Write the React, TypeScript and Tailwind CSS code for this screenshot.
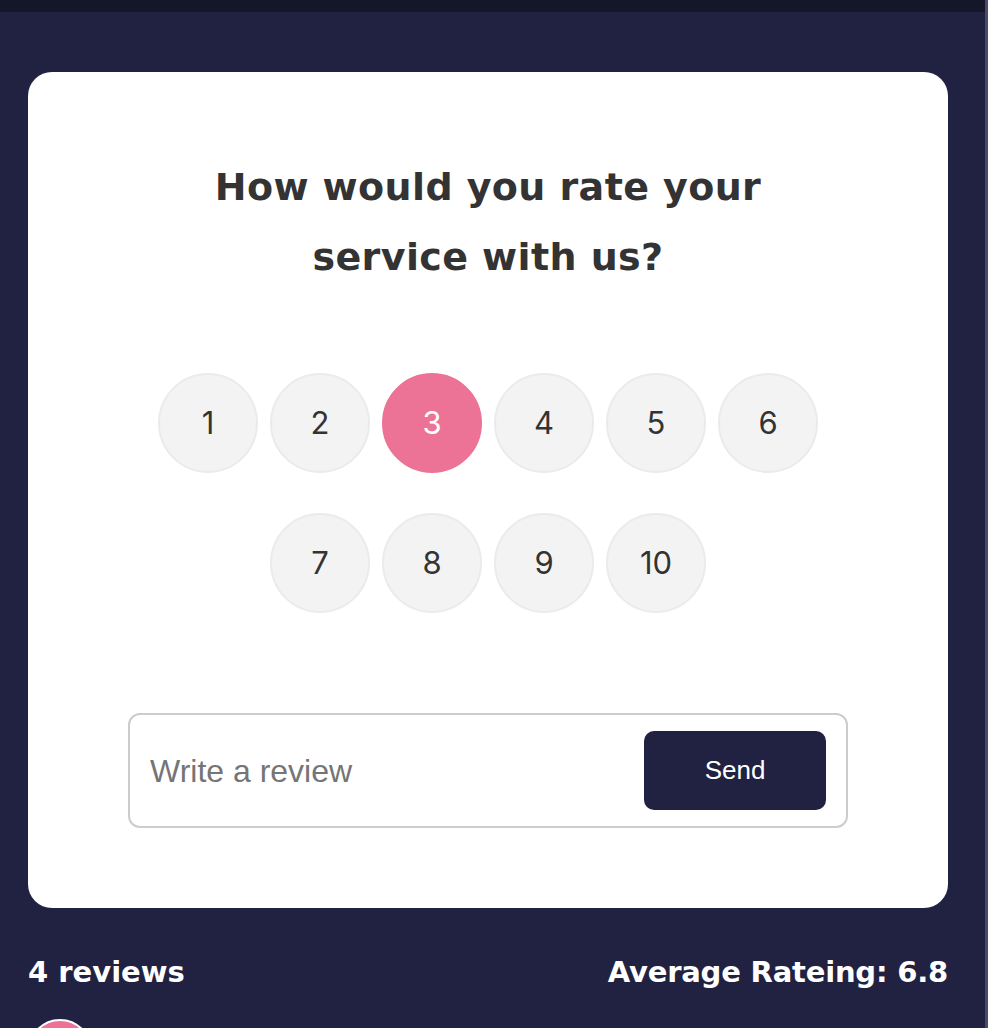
import React, { useState } from "react";

const ratings = [1, 2, 3, 4, 5, 6, 7, 8, 9, 10];

const App: React.FC = () => {
  const [selected, setSelected] = useState<number>(3);
  const [review, setReview] = useState<string>("");

  return (
    <div className="min-h-screen flex bg-[#212242] font-['Inter',sans-serif] overflow-hidden">
      <div className="flex-1 min-w-0">
        <div className="h-3 bg-[#15162a]" />
        <div className="pl-7 pr-[37px] pt-[60px]">
          <div className="bg-white rounded-[24px] pt-20 pb-20 flex flex-col items-center">
            <h1 className="text-center text-[38px] leading-[70px] font-bold text-[#333333] tracking-[0.4px] font-['DejaVu_Sans',sans-serif]">
              How would you rate your
              <br />
              service with us?
            </h1>

            <div className="mt-[81px] w-[700px] flex flex-wrap justify-center gap-x-3 gap-y-10">
              {ratings.map((n) => (
                <button
                  key={n}
                  onClick={() => setSelected(n)}
                  className={
                    n === selected
                      ? "w-[100px] h-[100px] rounded-full bg-[#ec7396] border-2 border-[#ec7396] text-white text-[31px] flex items-center justify-center"
                      : "w-[100px] h-[100px] rounded-full bg-[#f3f3f3] border-2 border-[#ebebeb] text-[#333333] text-[31px] flex items-center justify-center"
                  }
                >
                  {n}
                </button>
              ))}
            </div>

            <form
              className="mt-[100px] w-[720px] h-[115px] border-2 border-[#cccccc] rounded-xl flex items-center pl-5 pr-5"
              onSubmit={(e) => {
                e.preventDefault();
                setReview("");
              }}
            >
              <input
                value={review}
                onChange={(e) => setReview(e.target.value)}
                placeholder="Write a review"
                className="flex-1 min-w-0 outline-none text-[32px] font-['Liberation_Sans',Arial,sans-serif] text-[#333333] placeholder:text-[#757575]"
              />
              <button
                type="submit"
                className="w-[182px] h-[79px] rounded-[10px] bg-[#212242] text-white text-[26px] font-['Liberation_Sans',Arial,sans-serif]"
              >
                Send
              </button>
            </form>
          </div>

          <div className="mt-[42px] flex items-center justify-between text-white text-[29px] font-bold leading-[45px] font-['DejaVu_Sans',sans-serif]">
            <span>4 reviews</span>
            <span className="tracking-[-0.2px]">Average Rateing: 6.8</span>
          </div>

          <div className="mt-[24px] w-16 h-16 rounded-full bg-[#ec7396] border-2 border-white" />
        </div>
      </div>
      <div className="w-[3px] bg-[#4a4b66]" />
    </div>
  );
};

export default App;
